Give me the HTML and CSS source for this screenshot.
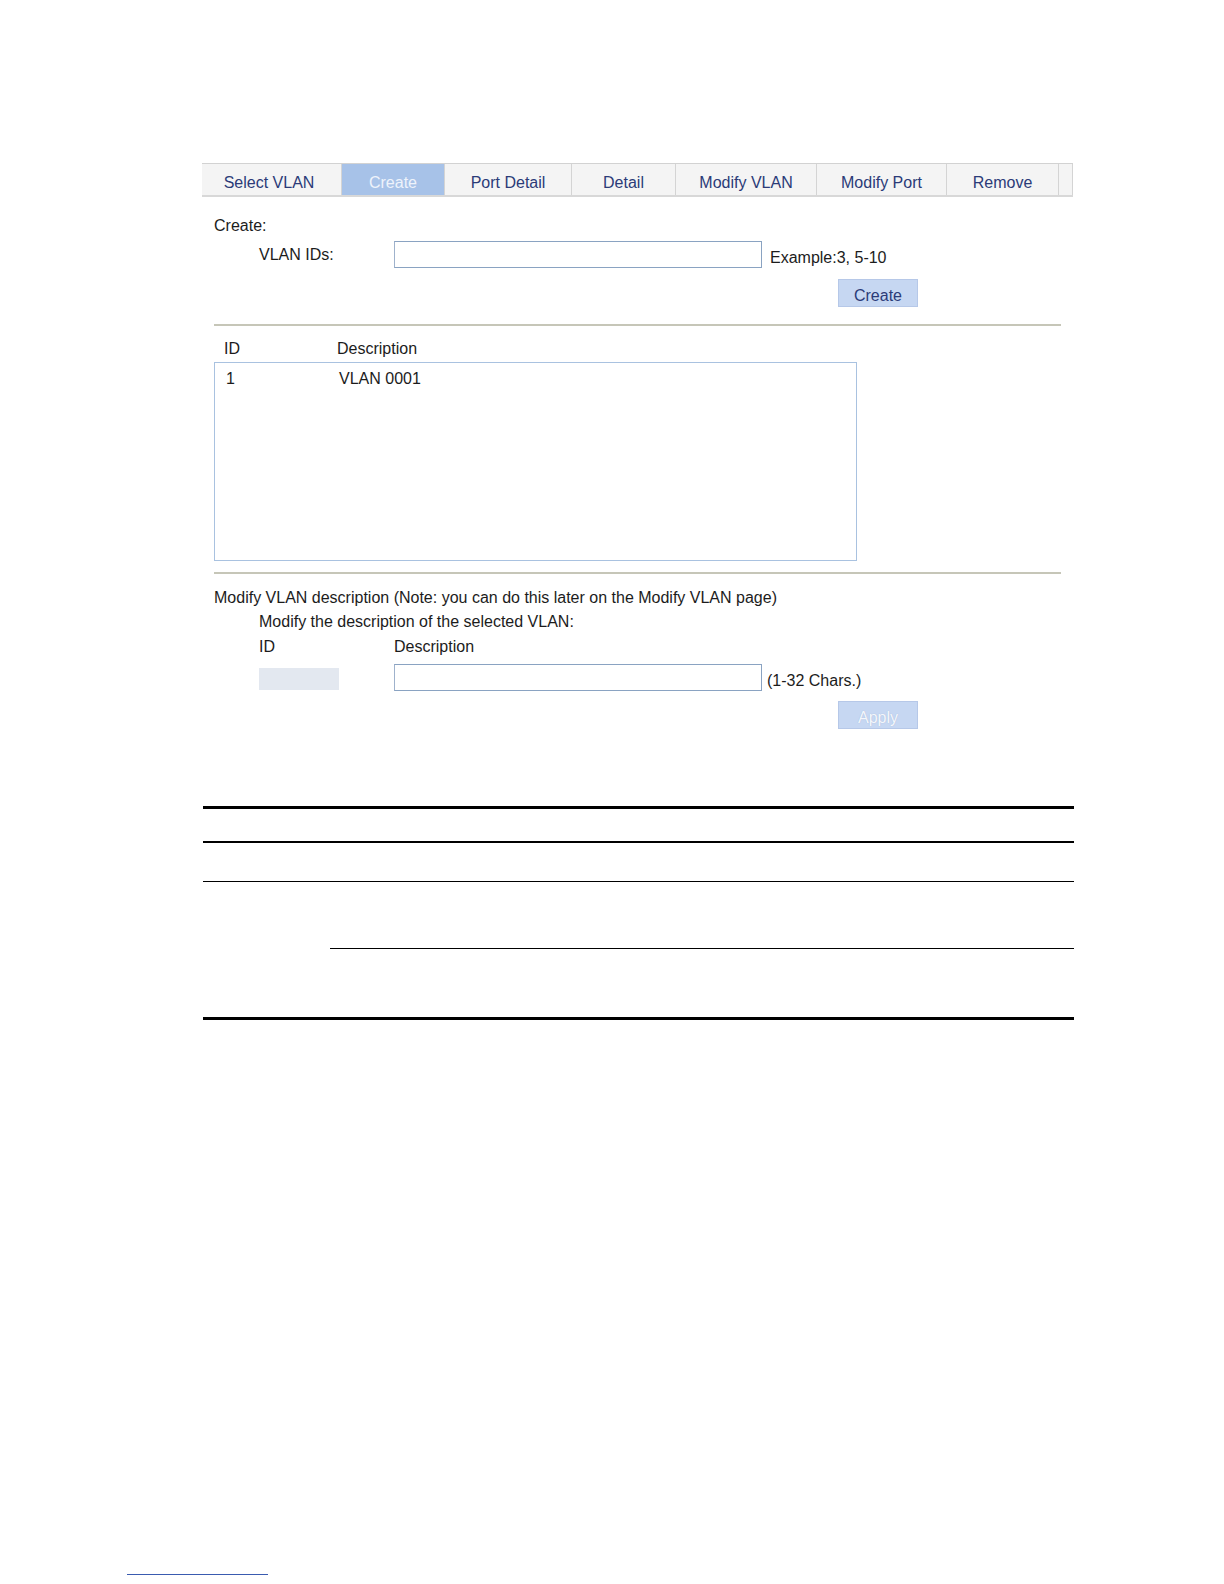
FILE: index.html
```html
<!DOCTYPE html>
<html>
<head>
<meta charset="utf-8">
<link rel="stylesheet" href="styles.css">
</head>
<body>
<div class="page">
  <div class="tabs">
    <div class="tab">Select VLAN</div>
    <div class="tab active">Create</div>
    <div class="tab">Port Detail</div>
    <div class="tab">Detail</div>
    <div class="tab">Modify VLAN</div>
    <div class="tab">Modify Port</div>
    <div class="tab">Remove</div>
    <div class="tab blank"></div>
  </div>

  <div class="form">
    <div class="line title">Create:</div>
    <div class="row ids-row">
      <div class="label">VLAN IDs:</div>
      <div class="input"></div>
      <div class="hint">Example:3, 5-10</div>
    </div>
    <div class="btn-row"><div class="btn">Create</div></div>
    <div class="rule"></div>

    <div class="list-head line">
      <span class="col-id">ID</span>
      <span class="col-desc">Description</span>
    </div>
    <div class="listbox">
      <div class="list-row line">
        <span class="col-id">1</span>
        <span class="col-desc">VLAN 0001</span>
      </div>
    </div>
    <div class="rule rule2"></div>

    <div class="line mod-title">Modify VLAN description (Note: you can do this later on the Modify VLAN page)</div>
    <div class="line indent mod-sub">Modify the description of the selected VLAN:</div>
    <div class="line indent mod-head">
      <span class="m-id">ID</span>
      <span>Description</span>
    </div>
    <div class="row mod-row">
      <div class="idbox"></div>
      <div class="input"></div>
      <div class="hint hint2">(1-32 Chars.)</div>
    </div>
    <div class="btn-row apply-row"><div class="btn disabled">Apply</div></div>
  </div>

  <div class="doc">
    <div class="dl thick first"></div>
    <div class="dl mid"></div>
    <div class="dl thin third"></div>
    <div class="dl thin fourth"></div>
    <div class="dl thick last"></div>
  </div>
</div>
<div class="footer-link"></div>
</body>
</html>
```

FILE: styles.css
```css
html, body {
  margin: 0;
  padding: 0;
  background: #ffffff;
}
body {
  font-family: "Liberation Sans", Arial, sans-serif;
  font-size: 16px;
  color: #1c1c1c;
  overflow: hidden;
}
.page {
  padding-top: 163px;
  margin-left: 202px;
  width: 871px;
}
.tabs {
  display: grid;
  grid-template-columns: 140px 103px 127px 104px 141px 130px 112px 14px;
  height: 34px;
  border-top: 1px solid #d2d2d2;
  border-bottom: 2px solid #d8d8d8;
  box-sizing: border-box;
  background: #f4f4f4;
}
.tab {
  display: flex;
  align-items: center;
  justify-content: center;
  color: #2b3b78;
  border-right: 1px solid #d4d4d4;
  padding-top: 7px;
  box-sizing: border-box;
}
.tab:first-child { padding-right: 5px; }
.tab.active {
  background: #a7c2e8;
  color: #eef3fb;
}
.form {
  padding-left: 12px;
  width: 847px;
}
.line {
  line-height: 20px;
  height: 20px;
}
.title { margin-top: 19px; }
.row {
  display: flex;
  align-items: center;
}
.ids-row {
  margin-top: 5px;
  height: 27px;
}
.label {
  width: 135px;
  padding-left: 45px;
}
.input {
  width: 368px;
  height: 27px;
  box-sizing: border-box;
  border: 1px solid #8aa3c2;
  border-left-color: #9fb2cc;
  background: #fff;
}
.hint {
  margin-left: 8px;
  align-self: flex-end;
  line-height: 20px;
}
.hint2 { margin-left: 5px; }
.btn-row {
  display: flex;
  padding-left: 624px;
  margin-top: 11px;
}
.btn {
  width: 80px;
  height: 28px;
  box-sizing: border-box;
  background: #c6d7f2;
  border: 1px solid #b6c8e8;
  color: #2b3b78;
  display: flex;
  align-items: center;
  justify-content: center;
  padding-top: 5px;
}
.btn.disabled {
  color: #f4f7fc;
  text-shadow: 0 0 1px #9fb2d4;
}
.rule {
  margin-top: 17px;
  height: 2px;
  background: #c6c6b8;
  width: 847px;
}
.rule2 { margin-top: 11px; }
.list-head {
  margin-top: 13px;
  display: flex;
  padding-left: 10px;
}
.col-id { width: 113px; }
.listbox {
  margin-top: 3px;
  width: 643px;
  height: 199px;
  box-sizing: border-box;
  border: 1px solid #a9c2e0;
  padding-top: 6px;
  padding-left: 11px;
}
.list-row { display: flex; }
.mod-title { margin-top: 14px; }
.indent { padding-left: 45px; }
.mod-sub { margin-top: 4px; }
.mod-head {
  margin-top: 5px;
  display: flex;
}
.m-id { width: 135px; }
.mod-row {
  margin-top: 7px;
  height: 27px;
  padding-left: 45px;
}
.idbox {
  width: 80px;
  height: 22px;
  background: #e3e8f0;
  margin-right: 55px;
  margin-top: 2px;
}
.apply-row { margin-top: 10px; }
.doc {
  margin-top: 77px;
  margin-left: 1px;
  width: 871px;
}
.dl { background: #000; }
.thick { height: 3px; }
.mid { height: 2px; margin-top: 32px; }
.thin { height: 1px; }
.third { margin-top: 38px; }
.fourth { margin-top: 66px; margin-left: 127px; }
.last { margin-top: 68px; }
.footer-link {
  margin-top: 554px;
  margin-left: 127px;
  width: 141px;
  height: 1px;
  background: #3a5bb0;
}
```
